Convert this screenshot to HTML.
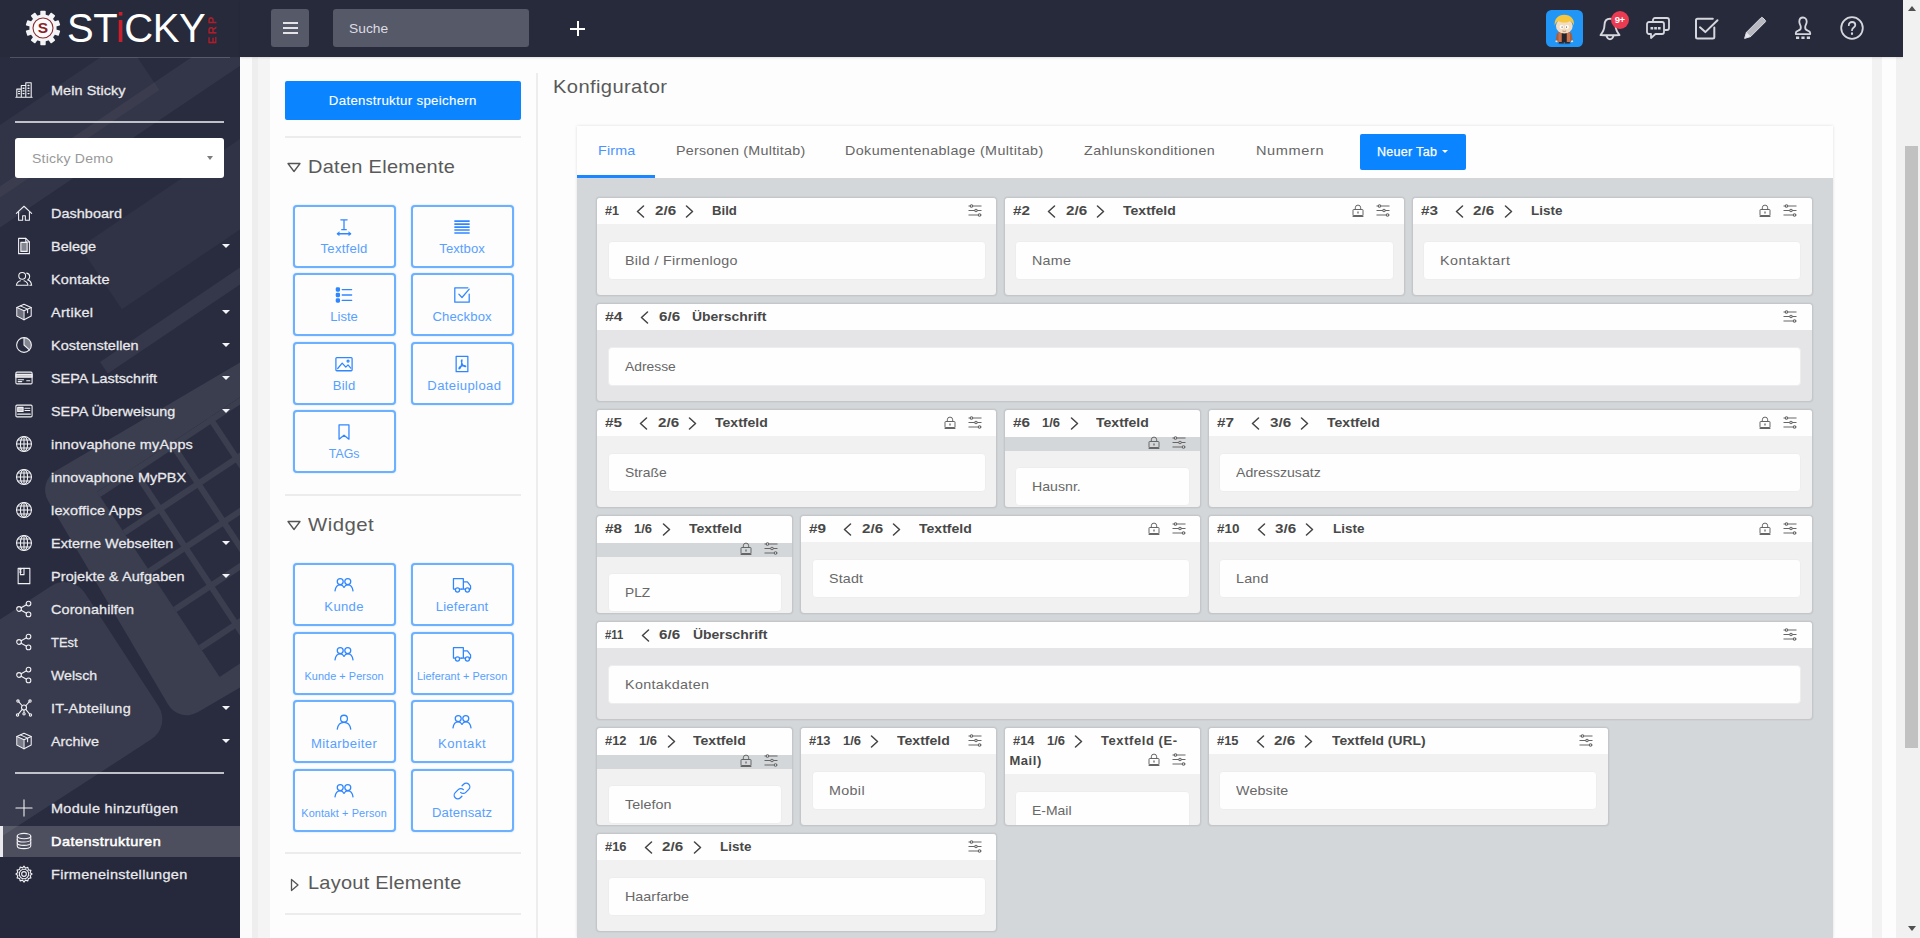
<!DOCTYPE html>
<html lang="de"><head><meta charset="utf-8"><title>Sticky ERP - Datenstrukturen</title>
<style>
*{box-sizing:border-box}
html,body{margin:0;padding:0}
body{width:1920px;height:938px;overflow:hidden;position:relative;background:#fdfdfd;font-family:"Liberation Sans",sans-serif;color:#555}
#sidebar{position:absolute;left:0;top:0;width:240px;height:938px;background:#2d3043;overflow:hidden;color:#fff}
.sbg{position:absolute;left:0;top:57px;width:240px;height:881px;overflow:hidden}
.sbg i{position:absolute;display:block}
.logo{position:absolute;left:0;top:0;width:240px;height:57px;background:#262a3b}
.shr{position:absolute;left:15px;width:209px;height:2px;background:#d9dae0;opacity:.85}
.sel{position:absolute;left:15px;top:138px;width:209px;height:40px;background:#fff;border-radius:3px;color:#999;font-size:13px;line-height:42px;padding-left:17px}
.sel i{position:absolute;right:11.500px;top:18px;border:3.900px solid transparent;border-top:4.200px solid #7c7c7c;border-bottom:0}
.mi{position:absolute;left:0;width:240px;height:33px;line-height:33px;font-size:13.500px;font-weight:400;color:#e9e9ee;white-space:nowrap;letter-spacing:.5px;-webkit-text-stroke:.3px #e9e9ee}
.mi.act{background:rgba(255,255,255,.17);height:31px;line-height:31px;margin-top:1px;border-left:3px solid #e9e9ee}
.mi.act .ic{left:12px;top:6.500px}
.mi.act .ml{left:48px;color:#fff;-webkit-text-stroke:.55px #fff}
.mi .ic{position:absolute;left:15px;top:7.500px;width:18px;height:18px;line-height:0;color:#f1f1f4}
.mi .ml{position:absolute;left:51px;top:.6px;text-shadow:0 0 1px rgba(0,0,0,.3)}
.mi .car{position:absolute;left:221.800px;top:14.500px;border:4.300px solid transparent;border-top:4.800px solid #f4f4f6;border-bottom:0}
#topbar{position:absolute;left:240px;top:0;width:1663px;height:57px;background:#262a3b;box-shadow:0 1px 2px rgba(0,0,0,.12)}
.hb{position:absolute;left:31px;top:9px;width:38px;height:38px;background:#565967;border-radius:3px}
.hb i{position:absolute;left:12px;width:15px;height:2px;background:#e4e4e8}
.hb i:nth-child(1){top:13px}.hb i:nth-child(2){top:18px}.hb i:nth-child(3){top:23px}
.srch{position:absolute;left:93px;top:9px;width:196px;height:38px;background:#565967;border-radius:3px;color:#dcdce2;font-size:13px;line-height:40px;padding-left:16px}
.plus{position:absolute;left:330px;top:21px;width:15px;height:15px}
.plus:before{content:"";position:absolute;left:0;top:6.500px;width:15px;height:2px;background:#fff}
.plus:after{content:"";position:absolute;left:6.500px;top:0;width:2px;height:15px;background:#fff}
.ti{position:absolute;color:#d6d6dd;line-height:0}
#sb{position:absolute;left:1903px;top:0;width:17px;height:938px;background:#f1f1f1}
#sb .th{position:absolute;left:2px;top:146px;width:13px;height:602px;background:#c1c1c1}
#sb .up{position:absolute;left:4.500px;top:6px;border:4px solid transparent;border-bottom:5px solid #505050;border-top:0}
#sb .dn{position:absolute;left:4.500px;top:926px;border:4px solid transparent;border-top:5px solid #505050;border-bottom:0}
#content{position:absolute;left:0;top:0;width:1903px;height:938px;background:#fdfdfd;overflow:hidden}
.strip{position:absolute;top:57px;height:881px}
.s1{left:240px;width:12px;background:#fbfbfb}
.s2{left:252px;width:6px;background:#eeeeef}
.s3{left:258px;width:12px;background:#f4f4f4}
.s4{left:1872px;width:10px;background:#f2f2f2}
.s5{left:1896px;width:7px;background:#f1f1f1}
#main{position:absolute;left:270px;top:57px;width:1602px;height:881px;background:#fdfdfd}
.savebtn{position:absolute;left:285px;top:81px;width:236px;height:39px;background:#0a84ff;border-radius:2px;color:#fff;font-size:12.500px;text-align:center;line-height:40px;-webkit-text-stroke:.12px #fff}
.hr{position:absolute;left:285px;width:236px;height:2px;background:#ececec}
.sec{position:absolute;left:287px;height:28px;line-height:28px;font-size:18.500px;color:#5a5a5a;white-space:nowrap}
.sec svg{position:absolute;left:0;top:9px}
.sec>span{position:absolute;left:21px;top:0}
.eb{position:absolute;width:102.500px;height:63px;border:2px solid #6cb1ff;border-radius:4px;background:#fdfdfd;color:#3f8fff;text-align:center;box-shadow:0 0 1.500px rgba(80,160,255,.5)}
.eb .ei{position:absolute;left:0;width:100%;top:11px;line-height:0;color:#2f86ff}
.eb .el{position:absolute;left:-4px;right:-4px;top:34px;font-size:12px;letter-spacing:.75px;line-height:16px;color:#58a0ff;white-space:nowrap}
.eb.sm .el{font-size:10px;letter-spacing:.35px;top:35px}
.vline{position:absolute;left:536px;top:73px;width:2px;height:865px;background:#ededed}
.ttl{position:absolute;left:553px;top:73px;font-size:18.500px;white-space:nowrap;line-height:28px;color:#5a5a5a}
#tabs{position:absolute;left:577px;top:126px;width:1256px;height:812px;box-shadow:0 0 3px rgba(0,0,0,.13)}
.tabbar{position:absolute;left:0;top:0;width:1256px;height:52px;background:#fefefe}
.tab{position:absolute;top:0;height:52px;line-height:50px;font-size:13px;color:#666;white-space:nowrap}
.tab.on{left:0;width:78px;padding-left:21px;color:#4a94ff;border-bottom:3px solid #1a86ff}
.ntab{position:absolute;left:783px;top:8px;width:106px;height:35.500px;background:#0a84ff;border-radius:2px;color:#fff;font-size:12.500px;letter-spacing:.3px;line-height:36px;padding-left:17px;-webkit-text-stroke:.25px #fff}
.ntab i{position:absolute;left:82px;top:16px;border:3px solid transparent;border-top:3.500px solid #fff;border-bottom:0}
.tabgray{position:absolute;left:0;top:52px;width:1256px;height:760px;background:#d3d7da}
.cd{position:absolute;height:99px;border:1px solid #c4c7ca;border-radius:4px;overflow:hidden;background:#f1f1f1;box-shadow:0 0 1.500px rgba(0,0,0,.14)}
.cd .ch_{position:relative;height:26.700px;background:#fefefe;font-size:13px;font-weight:700;color:#484848;line-height:19.500px;padding:3.500px 0 0 4.500px;white-space:nowrap;letter-spacing:.5px}
.cd .ch_ span{display:inline-block;vertical-align:top}
.cd .nm{margin-left:3.800px;transform-origin:0 50%;letter-spacing:0}
.cd .cl{margin-left:17px;width:9px;line-height:0;padding-top:3.500px}
.cd .cr{margin-left:9px;width:9px;line-height:0;padding-top:3.500px}
.cd .fr{margin-left:9.500px;transform-origin:0 50%;letter-spacing:0}
.cd .fr.nl{margin-left:11.900px}
.cd .ty{margin-left:18.400px;letter-spacing:.6px}
.cd .ty.nr{margin-left:12.500px}
.cd .fr.nl+.cr{margin-left:9.700px}
.cd .fr.nl+.cr+.ty{margin-left:17.700px}
.cd .ics{position:absolute;right:14.500px;top:6.500px;line-height:0;white-space:nowrap}
.cd .ics svg{margin-left:12px}
.cd .cb{position:relative;padding:17px 10.500px 0}
.cd .inp{height:39px;background:#fefefe;border:1px solid #ededed;border-radius:4px;font-size:13px;line-height:37px;color:#686868;padding-left:16px;white-space:nowrap}
.cd.hd{background:#e5e5e7}
.cd.wrap .ics{top:26px}
.cd.wrap .ch_{height:27.200px}
.cd.wrap .cb{margin-top:14px;background:#f1f1f1;height:70px;padding-top:16.500px}
.cd.wrap{background:#d3d7da}
.cd.two .ch_{height:46px;white-space:normal}
.cd.two .ics{top:25.500px}
.cd.two .ch_ span.ty{display:inline}
.lg{position:absolute;left:67px;top:5px;font-size:40px;line-height:46px;color:#fff;letter-spacing:-.400px;white-space:nowrap;font-weight:400}
.lg b{font-weight:400;color:#c8202c}
.erp{position:absolute;left:206.500px;top:44px;font-size:11px;font-weight:700;line-height:10px;color:#b01c28;transform-origin:0 0;transform:rotate(-90deg);letter-spacing:2.400px;white-space:nowrap}
.av{position:absolute;left:1306px;top:9.500px;width:37px;height:37px;line-height:0}
.bdg{position:absolute;left:1371px;top:11px;width:17.500px;height:17.500px;border-radius:9px;background:#ea3b52;color:#fff;font-size:9.500px;font-weight:700;line-height:17px;text-align:center;letter-spacing:-.5px}
/* sidebar backdrop (keyboard photo approximation) ; coordinates relative to .sbg (top:57) */
#sidebar{background:#292c3f}
.sbg .k1{left:37px;top:425px;width:460px;height:280px;transform-origin:0 0;transform:rotate(-30.500deg);background:rgba(255,255,255,.085);border-radius:22px}
.sbg .k2{left:97px;top:435px;width:330px;height:222px;transform-origin:0 0;transform:rotate(-33.500deg);background-color:#2a2d40;background-image:linear-gradient(90deg,#3b3e4f 0,#3b3e4f 6px,transparent 6px),linear-gradient(0deg,#3b3e4f 0,#3b3e4f 6px,transparent 6px);background-size:46px 46px;background-position:-6px 6px}
.sbg .k3{left:-60px;top:170px;width:420px;height:34px;transform-origin:0 0;transform:rotate(-34deg);background:rgba(255,255,255,.05)}
.sbg .k4{left:80px;top:190px;width:300px;height:75px;transform-origin:0 0;transform:rotate(-34deg);background:rgba(255,255,255,.035)}
.sbg .k5{left:100px;top:305px;width:220px;height:14px;transform-origin:0 0;transform:rotate(-34deg);background:rgba(255,255,255,.06)}
.sbg .k6{left:-40px;top:95px;width:200px;height:60px;transform-origin:0 0;transform:rotate(-34deg);background:rgba(255,255,255,.04)}
.sbg .k7{left:-158px;top:665px;width:274px;height:183px;transform-origin:0 0;transform:rotate(-33deg);border-radius:24px;background:rgba(255,255,255,.075)}
.sbg .k8{left:0;top:800px;width:240px;height:81px;background:rgba(0,0,0,.06)}

</style></head><body>
<div id="content">
<div class="strip s1"></div><div class="strip s2"></div><div class="strip s3"></div><div class="strip s4"></div><div class="strip s5"></div>
<div id="main"></div>
<div class="savebtn"><span style="display:inline-block;letter-spacing:0.30px;transform:scaleX(1.060);transform-origin:50% 50%">Datenstruktur speichern</span></div>
<div class="hr" style="top:136px"></div>
<div class="sec" style="top:153px"><svg width="14" height="11" viewBox="0 0 14 11" fill="none" stroke="#555" stroke-width="1.300" stroke-linejoin="round"><path d="M1 1.500h12L7 9.500z"/></svg><span><span style="display:inline-block;letter-spacing:0.26px;transform:scaleX(1.080);transform-origin:0 50%">Daten Elemente</span></span></div>
<div class="hr" style="top:494px"></div>
<div class="sec" style="top:511px"><svg width="14" height="11" viewBox="0 0 14 11" fill="none" stroke="#555" stroke-width="1.300" stroke-linejoin="round"><path d="M1 1.500h12L7 9.500z"/></svg><span><span style="display:inline-block;letter-spacing:0.44px;transform:scaleX(1.100);transform-origin:0 50%">Widget</span></span></div>
<div class="hr" style="top:852px"></div>
<div class="sec" style="top:869px"><svg width="14" height="14" viewBox="0 0 14 14" fill="none" stroke="#555" stroke-width="1.300" stroke-linejoin="round"><path d="M4.500 1.500v11L11 7z"/></svg><span><span style="display:inline-block;letter-spacing:0.22px;transform:scaleX(1.080);transform-origin:0 50%">Layout Elemente</span></span></div>
<div class="hr" style="top:913px"></div>
<div class="eb" style="left:293px;top:205px"><span class="ei"><svg width="18" height="18" viewBox="0 0 20 20" fill="none" stroke="currentColor" stroke-width="1.400" stroke-linecap="round" stroke-linejoin="round"><path d="M6.500 2h7M10 2v11M7.500 13h5M3 17.500h14"/><path d="M4.500 15.500l-2.500 2 2.500 2zM15.500 15.500l2.500 2-2.500 2z" fill="currentColor" stroke-width=".6"/></svg></span><span class="el" style="letter-spacing:0.22px;transform:scaleX(1.090);transform-origin:50% 50%;margin-left:0.30px">Textfeld</span></div>
<div class="eb" style="left:411px;top:205px"><span class="ei"><svg width="18" height="18" viewBox="0 0 20 20" fill="none" stroke="currentColor" stroke-width="1.400" stroke-linecap="round" stroke-linejoin="round"><path d="M1.500 3.500h17M1.500 6.800h17M1.500 10.100h17M1.500 13.400h17M1.500 16.700h17" stroke-width="1.800" stroke-linecap="butt"/></svg></span><span class="el" style="letter-spacing:0.07px;transform:scaleX(1.090);transform-origin:50% 50%;margin-left:0.30px">Textbox</span></div>
<div class="eb" style="left:293px;top:273px"><span class="ei"><svg width="18" height="18" viewBox="0 0 20 20" fill="none" stroke="currentColor" stroke-width="1.400" stroke-linecap="round" stroke-linejoin="round"><rect x="1.500" y="2.200" width="3.400" height="3.400" rx=".8" fill="currentColor"/><rect x="1.500" y="8.300" width="3.400" height="3.400" rx=".8" fill="currentColor"/><rect x="1.500" y="14.400" width="3.400" height="3.400" rx=".8" fill="currentColor"/><path d="M8 3.900h10.500M8 10h10.500M8 16.100h10.500"/></svg></span><span class="el" style="letter-spacing:0.00px;transform:scaleX(1.087);transform-origin:50% 50%;margin-left:0.30px">Liste</span></div>
<div class="eb" style="left:411px;top:273px"><span class="ei"><svg width="18" height="18" viewBox="0 0 20 20" fill="none" stroke="currentColor" stroke-width="1.400" stroke-linecap="round" stroke-linejoin="round"><path d="M18 9v9H2V2h14.500"/><path d="M6.500 9l3.500 3.800 8-9.300"/></svg></span><span class="el" style="letter-spacing:0.13px;transform:scaleX(1.090);transform-origin:50% 50%;margin-left:0.30px">Checkbox</span></div>
<div class="eb" style="left:293px;top:342px"><span class="ei"><svg width="18" height="18" viewBox="0 0 20 20" fill="none" stroke="currentColor" stroke-width="1.400" stroke-linecap="round" stroke-linejoin="round"><rect x="1" y="3" width="18" height="14.500" rx="1"/><path d="M3 15l5-6 4 4.500 2.500-2.500 3 3.500"/><circle cx="14.500" cy="6.800" r="1.100"/></svg></span><span class="el" style="letter-spacing:0.21px;transform:scaleX(1.090);transform-origin:50% 50%;margin-left:0.30px">Bild</span></div>
<div class="eb" style="left:411px;top:342px"><span class="ei"><svg width="18" height="18" viewBox="0 0 20 20" fill="none" stroke="currentColor" stroke-width="1.400" stroke-linecap="round" stroke-linejoin="round"><path d="M3.500 1.500h13v17h-13z"/><path d="M10 5.500c-1 0-.8 2 0 4s3 4 4 3.200-3-1.300-5-.4-3 3-2 3 2.500-3 3-9.800"/></svg></span><span class="el" style="letter-spacing:0.35px;transform:scaleX(1.090);transform-origin:50% 50%;margin-left:3.80px">Dateiupload</span></div>
<div class="eb" style="left:293px;top:410.4px"><span class="ei"><svg width="18" height="18" viewBox="0 0 20 20" fill="none" stroke="currentColor" stroke-width="1.400" stroke-linecap="round" stroke-linejoin="round"><path d="M4.500 2h11v16l-5.500-4.500L4.500 18z"/></svg></span><span class="el" style="letter-spacing:-0.00px;transform:scaleX(1.030);transform-origin:50% 50%;margin-left:0.30px">TAGs</span></div>
<div class="eb" style="left:293px;top:563px"><span class="ei"><svg width="22" height="18" viewBox="0 0 22 20" fill="none" stroke="currentColor" stroke-width="1.400" stroke-linecap="round" stroke-linejoin="round"><circle cx="6.800" cy="6.200" r="3.300"/><circle cx="15.200" cy="6.200" r="3.300"/><path d="M1 16.500c.6-4 3-6.600 5.800-6.600 2 0 3.400 1.200 4.200 2.800M11 12.700c.8-1.600 2.200-2.800 4.200-2.800 2.800 0 5.200 2.600 5.800 6.600" /></svg></span><span class="el" style="letter-spacing:0.31px;transform:scaleX(1.090);transform-origin:50% 50%;margin-left:0.30px">Kunde</span></div>
<div class="eb" style="left:411px;top:563px"><span class="ei"><svg width="22" height="18" viewBox="0 0 22 20" fill="none" stroke="currentColor" stroke-width="1.400" stroke-linecap="round" stroke-linejoin="round"><path d="M1.500 3h11v11.500h-2M1.500 3v11.500h2M12.500 6.500h4.500l3.500 4.500v3.500h-1.500M12.500 14.500h2.500"/><circle cx="6" cy="15.500" r="2.300"/><circle cx="17" cy="15.500" r="2.300"/><path d="M8.300 14.500h2.200"/></svg></span><span class="el" style="letter-spacing:0.18px;transform:scaleX(1.090);transform-origin:50% 50%;margin-left:0.30px">Lieferant</span></div>
<div class="eb sm" style="left:293px;top:632px"><span class="ei"><svg width="22" height="18" viewBox="0 0 22 20" fill="none" stroke="currentColor" stroke-width="1.400" stroke-linecap="round" stroke-linejoin="round"><circle cx="6.800" cy="6.200" r="3.300"/><circle cx="15.200" cy="6.200" r="3.300"/><path d="M1 16.500c.6-4 3-6.600 5.800-6.600 2 0 3.400 1.200 4.200 2.800M11 12.700c.8-1.600 2.200-2.800 4.200-2.800 2.800 0 5.200 2.600 5.800 6.600" /></svg></span><span class="el" style="letter-spacing:0.05px;transform:scaleX(1.090);transform-origin:50% 50%;margin-left:0.30px">Kunde + Person</span></div>
<div class="eb sm" style="left:411px;top:632px"><span class="ei"><svg width="22" height="18" viewBox="0 0 22 20" fill="none" stroke="currentColor" stroke-width="1.400" stroke-linecap="round" stroke-linejoin="round"><path d="M1.500 3h11v11.500h-2M1.500 3v11.500h2M12.500 6.500h4.500l3.500 4.500v3.500h-1.500M12.500 14.500h2.500"/><circle cx="6" cy="15.500" r="2.300"/><circle cx="17" cy="15.500" r="2.300"/><path d="M8.300 14.500h2.200"/></svg></span><span class="el" style="letter-spacing:0.05px;transform:scaleX(1.090);transform-origin:50% 50%;margin-left:0.30px">Lieferant + Person</span></div>
<div class="eb" style="left:293px;top:700px"><span class="ei"><svg width="18" height="18" viewBox="0 0 20 20" fill="none" stroke="currentColor" stroke-width="1.400" stroke-linecap="round" stroke-linejoin="round"><circle cx="10" cy="6.300" r="3.800"/><path d="M2.500 18c.7-4.500 3.500-7.500 7.500-7.500s6.800 3 7.500 7.500"/></svg></span><span class="el" style="letter-spacing:0.37px;transform:scaleX(1.090);transform-origin:50% 50%;margin-left:0.30px">Mitarbeiter</span></div>
<div class="eb" style="left:411px;top:700px"><span class="ei"><svg width="22" height="18" viewBox="0 0 22 20" fill="none" stroke="currentColor" stroke-width="1.400" stroke-linecap="round" stroke-linejoin="round"><circle cx="6.800" cy="6.200" r="3.300"/><circle cx="15.200" cy="6.200" r="3.300"/><path d="M1 16.500c.6-4 3-6.600 5.800-6.600 2 0 3.400 1.200 4.200 2.800M11 12.700c.8-1.600 2.200-2.800 4.200-2.800 2.800 0 5.200 2.600 5.800 6.600" /></svg></span><span class="el" style="letter-spacing:0.52px;transform:scaleX(1.090);transform-origin:50% 50%;margin-left:0.30px">Kontakt</span></div>
<div class="eb sm" style="left:293px;top:769px"><span class="ei"><svg width="22" height="18" viewBox="0 0 22 20" fill="none" stroke="currentColor" stroke-width="1.400" stroke-linecap="round" stroke-linejoin="round"><circle cx="6.800" cy="6.200" r="3.300"/><circle cx="15.200" cy="6.200" r="3.300"/><path d="M1 16.500c.6-4 3-6.600 5.800-6.600 2 0 3.400 1.200 4.200 2.800M11 12.700c.8-1.600 2.200-2.800 4.200-2.800 2.800 0 5.200 2.600 5.800 6.600" /></svg></span><span class="el" style="letter-spacing:0.10px;transform:scaleX(1.090);transform-origin:50% 50%;margin-left:0.30px">Kontakt + Person</span></div>
<div class="eb" style="left:411px;top:769px"><span class="ei"><svg width="18" height="18" viewBox="0 0 20 20" fill="none" stroke="currentColor" stroke-width="1.400" stroke-linecap="round" stroke-linejoin="round"><path d="M8.500 11.500a4 4 0 0 0 5.700 0l3.300-3.300a4 4 0 0 0-5.700-5.700l-1.700 1.700"/><path d="M11.500 8.500a4 4 0 0 0-5.700 0l-3.300 3.300a4 4 0 0 0 5.700 5.700l1.700-1.700"/></svg></span><span class="el" style="letter-spacing:0.13px;transform:scaleX(1.090);transform-origin:50% 50%;margin-left:0.30px">Datensatz</span></div>

<div class="vline"></div>
<div class="ttl"><span style="display:inline-block;letter-spacing:0.34px;transform:scaleX(1.090);transform-origin:0 50%">Konfigurator</span></div>
<div id="tabs">
<div class="tabbar"><span class="tab on"><span style="display:inline-block;letter-spacing:0.15px;transform:scaleX(1.100);transform-origin:0 50%">Firma</span></span><span class="tab" style="left:98.500px"><span style="display:inline-block;letter-spacing:0.22px;transform:scaleX(1.100);transform-origin:0 50%">Personen (Multitab)</span></span><span class="tab" style="left:268px"><span style="display:inline-block;letter-spacing:0.37px;transform:scaleX(1.100);transform-origin:0 50%">Dokumentenablage (Multitab)</span></span><span class="tab" style="left:507px"><span style="display:inline-block;letter-spacing:0.36px;transform:scaleX(1.100);transform-origin:0 50%">Zahlunskonditionen</span></span><span class="tab" style="left:679px"><span style="display:inline-block;letter-spacing:0.54px;transform:scaleX(1.120);transform-origin:0 50%">Nummern</span></span><span class="ntab">Neuer Tab<i></i></span></div>
<div class="tabgray"></div>
</div>
<div class="cd" style="left:596.1px;top:196.8px;width:401.2px"><div class="ch_"><span class="nm" style="transform:scaleX(0.968);margin-right:-0.46px">#1</span><span class="cl"><svg class="ch" width="9" height="13" viewBox="0 0 9 13" fill="none" stroke="#444" stroke-width="1.500" stroke-linecap="round" stroke-linejoin="round"><path d="M7.500 1L1.500 6.500l6 5.500"/></svg></span><span class="fr" style="transform:scaleX(1.168);margin-right:3.03px">2/6</span><span class="cr"><svg class="ch" width="9" height="13" viewBox="0 0 9 13" fill="none" stroke="#444" stroke-width="1.500" stroke-linecap="round" stroke-linejoin="round"><path d="M1.500 1l6 5.500-6 5.500"/></svg></span><span class="ty" style="letter-spacing:0.00px;transform:scaleX(1.013);transform-origin:0 50%">Bild</span><span class="ics"><svg class="sl" width="14" height="13" viewBox="0 0 14 13" fill="none" stroke="#666" stroke-width="1.100"><path d="M.5 2h13M.5 6.500h13M.5 11h13"/><circle cx="3.500" cy="2" r="1.200" fill="#fff"/><circle cx="8" cy="6.500" r="1.200" fill="#fff"/><circle cx="11.500" cy="11" r="1.200" fill="#fff"/></svg></span></div><div class="cb"><div class="inp"><span style="display:inline-block;letter-spacing:0.29px;transform:scaleX(1.100);transform-origin:0 50%">Bild / Firmenlogo</span></div></div></div>
<div class="cd" style="left:1003.9px;top:196.8px;width:401.2px"><div class="ch_"><span class="nm" style="transform:scaleX(1.176);margin-right:2.54px">#2</span><span class="cl"><svg class="ch" width="9" height="13" viewBox="0 0 9 13" fill="none" stroke="#444" stroke-width="1.500" stroke-linecap="round" stroke-linejoin="round"><path d="M7.500 1L1.500 6.500l6 5.500"/></svg></span><span class="fr" style="transform:scaleX(1.168);margin-right:3.03px">2/6</span><span class="cr"><svg class="ch" width="9" height="13" viewBox="0 0 9 13" fill="none" stroke="#444" stroke-width="1.500" stroke-linecap="round" stroke-linejoin="round"><path d="M1.500 1l6 5.500-6 5.500"/></svg></span><span class="ty" style="letter-spacing:0.01px;transform:scaleX(1.080);transform-origin:0 50%">Textfeld</span><span class="ics"><svg class="lk" width="12" height="13" viewBox="0 0 12 13" fill="none" stroke="#666" stroke-width="1"><path d="M3.300 5.500V3.800a2.700 2.700 0 0 1 5.400 0v1.700"/><rect x="1" y="5.500" width="10" height="6" rx=".6"/><path d="M.6 12.300h10.800" stroke-width="1.500"/><path d="M6 7.500v2" stroke-width="1.300"/></svg><svg class="sl" width="14" height="13" viewBox="0 0 14 13" fill="none" stroke="#666" stroke-width="1.100"><path d="M.5 2h13M.5 6.500h13M.5 11h13"/><circle cx="3.500" cy="2" r="1.200" fill="#fff"/><circle cx="8" cy="6.500" r="1.200" fill="#fff"/><circle cx="11.500" cy="11" r="1.200" fill="#fff"/></svg></span></div><div class="cb"><div class="inp"><span style="display:inline-block;letter-spacing:0.22px;transform:scaleX(1.100);transform-origin:0 50%">Name</span></div></div></div>
<div class="cd" style="left:1411.7px;top:196.8px;width:401.2px"><div class="ch_"><span class="nm" style="transform:scaleX(1.176);margin-right:2.54px">#3</span><span class="cl"><svg class="ch" width="9" height="13" viewBox="0 0 9 13" fill="none" stroke="#444" stroke-width="1.500" stroke-linecap="round" stroke-linejoin="round"><path d="M7.500 1L1.500 6.500l6 5.500"/></svg></span><span class="fr" style="transform:scaleX(1.168);margin-right:3.03px">2/6</span><span class="cr"><svg class="ch" width="9" height="13" viewBox="0 0 9 13" fill="none" stroke="#444" stroke-width="1.500" stroke-linecap="round" stroke-linejoin="round"><path d="M1.500 1l6 5.500-6 5.500"/></svg></span><span class="ty" style="letter-spacing:0.00px;transform:scaleX(1.034);transform-origin:0 50%">Liste</span><span class="ics"><svg class="lk" width="12" height="13" viewBox="0 0 12 13" fill="none" stroke="#666" stroke-width="1"><path d="M3.300 5.500V3.800a2.700 2.700 0 0 1 5.400 0v1.700"/><rect x="1" y="5.500" width="10" height="6" rx=".6"/><path d="M.6 12.300h10.800" stroke-width="1.500"/><path d="M6 7.500v2" stroke-width="1.300"/></svg><svg class="sl" width="14" height="13" viewBox="0 0 14 13" fill="none" stroke="#666" stroke-width="1.100"><path d="M.5 2h13M.5 6.500h13M.5 11h13"/><circle cx="3.500" cy="2" r="1.200" fill="#fff"/><circle cx="8" cy="6.500" r="1.200" fill="#fff"/><circle cx="11.500" cy="11" r="1.200" fill="#fff"/></svg></span></div><div class="cb"><div class="inp"><span style="display:inline-block;letter-spacing:0.48px;transform:scaleX(1.100);transform-origin:0 50%">Kontaktart</span></div></div></div>
<div class="cd hd" style="left:596.1px;top:302.8px;width:1216.8px"><div class="ch_"><span class="nm" style="transform:scaleX(1.224);margin-right:3.24px">#4</span><span class="cl"><svg class="ch" width="9" height="13" viewBox="0 0 9 13" fill="none" stroke="#444" stroke-width="1.500" stroke-linecap="round" stroke-linejoin="round"><path d="M7.500 1L1.500 6.500l6 5.500"/></svg></span><span class="fr" style="transform:scaleX(1.168);margin-right:3.03px">6/6</span><span class="ty nr" style="letter-spacing:0.00px;transform:scaleX(1.072);transform-origin:0 50%">Überschrift</span><span class="ics"><svg class="sl" width="14" height="13" viewBox="0 0 14 13" fill="none" stroke="#666" stroke-width="1.100"><path d="M.5 2h13M.5 6.500h13M.5 11h13"/><circle cx="3.500" cy="2" r="1.200" fill="#fff"/><circle cx="8" cy="6.500" r="1.200" fill="#fff"/><circle cx="11.500" cy="11" r="1.200" fill="#fff"/></svg></span></div><div class="cb"><div class="inp"><span style="display:inline-block;letter-spacing:0.00px;transform:scaleX(1.065);transform-origin:0 50%">Adresse</span></div></div></div>
<div class="cd" style="left:596.1px;top:408.8px;width:401.2px"><div class="ch_"><span class="nm" style="transform:scaleX(1.176);margin-right:2.54px">#5</span><span class="cl"><svg class="ch" width="9" height="13" viewBox="0 0 9 13" fill="none" stroke="#444" stroke-width="1.500" stroke-linecap="round" stroke-linejoin="round"><path d="M7.500 1L1.500 6.500l6 5.500"/></svg></span><span class="fr" style="transform:scaleX(1.168);margin-right:3.03px">2/6</span><span class="cr"><svg class="ch" width="9" height="13" viewBox="0 0 9 13" fill="none" stroke="#444" stroke-width="1.500" stroke-linecap="round" stroke-linejoin="round"><path d="M1.500 1l6 5.500-6 5.500"/></svg></span><span class="ty" style="letter-spacing:0.01px;transform:scaleX(1.080);transform-origin:0 50%">Textfeld</span><span class="ics"><svg class="lk" width="12" height="13" viewBox="0 0 12 13" fill="none" stroke="#666" stroke-width="1"><path d="M3.300 5.500V3.800a2.700 2.700 0 0 1 5.400 0v1.700"/><rect x="1" y="5.500" width="10" height="6" rx=".6"/><path d="M.6 12.300h10.800" stroke-width="1.500"/><path d="M6 7.500v2" stroke-width="1.300"/></svg><svg class="sl" width="14" height="13" viewBox="0 0 14 13" fill="none" stroke="#666" stroke-width="1.100"><path d="M.5 2h13M.5 6.500h13M.5 11h13"/><circle cx="3.500" cy="2" r="1.200" fill="#fff"/><circle cx="8" cy="6.500" r="1.200" fill="#fff"/><circle cx="11.500" cy="11" r="1.200" fill="#fff"/></svg></span></div><div class="cb"><div class="inp"><span style="display:inline-block;letter-spacing:0.00px;transform:scaleX(1.067);transform-origin:0 50%">Straße</span></div></div></div>
<div class="cd wrap" style="left:1003.9px;top:408.8px;width:197.3px"><div class="ch_"><span class="nm" style="transform:scaleX(1.176);margin-right:2.54px">#6</span><span class="fr nl" style="transform:scaleX(0.996);margin-right:-0.07px">1/6</span><span class="cr"><svg class="ch" width="9" height="13" viewBox="0 0 9 13" fill="none" stroke="#444" stroke-width="1.500" stroke-linecap="round" stroke-linejoin="round"><path d="M1.500 1l6 5.500-6 5.500"/></svg></span><span class="ty" style="letter-spacing:0.01px;transform:scaleX(1.080);transform-origin:0 50%">Textfeld</span><span class="ics"><svg class="lk" width="12" height="13" viewBox="0 0 12 13" fill="none" stroke="#666" stroke-width="1"><path d="M3.300 5.500V3.800a2.700 2.700 0 0 1 5.400 0v1.700"/><rect x="1" y="5.500" width="10" height="6" rx=".6"/><path d="M.6 12.300h10.800" stroke-width="1.500"/><path d="M6 7.500v2" stroke-width="1.300"/></svg><svg class="sl" width="14" height="13" viewBox="0 0 14 13" fill="none" stroke="#666" stroke-width="1.100"><path d="M.5 2h13M.5 6.500h13M.5 11h13"/><circle cx="3.500" cy="2" r="1.200" fill="#fff"/><circle cx="8" cy="6.500" r="1.200" fill="#fff"/><circle cx="11.500" cy="11" r="1.200" fill="#fff"/></svg></span></div><div class="cb"><div class="inp"><span style="display:inline-block;letter-spacing:0.00px;transform:scaleX(1.088);transform-origin:0 50%">Hausnr.</span></div></div></div>
<div class="cd" style="left:1207.8px;top:408.8px;width:605.1px"><div class="ch_"><span class="nm" style="transform:scaleX(1.176);margin-right:2.54px">#7</span><span class="cl"><svg class="ch" width="9" height="13" viewBox="0 0 9 13" fill="none" stroke="#444" stroke-width="1.500" stroke-linecap="round" stroke-linejoin="round"><path d="M7.500 1L1.500 6.500l6 5.500"/></svg></span><span class="fr" style="transform:scaleX(1.168);margin-right:3.03px">3/6</span><span class="cr"><svg class="ch" width="9" height="13" viewBox="0 0 9 13" fill="none" stroke="#444" stroke-width="1.500" stroke-linecap="round" stroke-linejoin="round"><path d="M1.500 1l6 5.500-6 5.500"/></svg></span><span class="ty" style="letter-spacing:0.01px;transform:scaleX(1.080);transform-origin:0 50%">Textfeld</span><span class="ics"><svg class="lk" width="12" height="13" viewBox="0 0 12 13" fill="none" stroke="#666" stroke-width="1"><path d="M3.300 5.500V3.800a2.700 2.700 0 0 1 5.400 0v1.700"/><rect x="1" y="5.500" width="10" height="6" rx=".6"/><path d="M.6 12.300h10.800" stroke-width="1.500"/><path d="M6 7.500v2" stroke-width="1.300"/></svg><svg class="sl" width="14" height="13" viewBox="0 0 14 13" fill="none" stroke="#666" stroke-width="1.100"><path d="M.5 2h13M.5 6.500h13M.5 11h13"/><circle cx="3.500" cy="2" r="1.200" fill="#fff"/><circle cx="8" cy="6.500" r="1.200" fill="#fff"/><circle cx="11.500" cy="11" r="1.200" fill="#fff"/></svg></span></div><div class="cb"><div class="inp"><span style="display:inline-block;letter-spacing:-0.00px;transform:scaleX(1.086);transform-origin:0 50%">Adresszusatz</span></div></div></div>
<div class="cd wrap" style="left:596.1px;top:514.8px;width:197.3px"><div class="ch_"><span class="nm" style="transform:scaleX(1.176);margin-right:2.54px">#8</span><span class="fr nl" style="transform:scaleX(0.996);margin-right:-0.07px">1/6</span><span class="cr"><svg class="ch" width="9" height="13" viewBox="0 0 9 13" fill="none" stroke="#444" stroke-width="1.500" stroke-linecap="round" stroke-linejoin="round"><path d="M1.500 1l6 5.500-6 5.500"/></svg></span><span class="ty" style="letter-spacing:0.01px;transform:scaleX(1.080);transform-origin:0 50%">Textfeld</span><span class="ics"><svg class="lk" width="12" height="13" viewBox="0 0 12 13" fill="none" stroke="#666" stroke-width="1"><path d="M3.300 5.500V3.800a2.700 2.700 0 0 1 5.400 0v1.700"/><rect x="1" y="5.500" width="10" height="6" rx=".6"/><path d="M.6 12.300h10.800" stroke-width="1.500"/><path d="M6 7.500v2" stroke-width="1.300"/></svg><svg class="sl" width="14" height="13" viewBox="0 0 14 13" fill="none" stroke="#666" stroke-width="1.100"><path d="M.5 2h13M.5 6.500h13M.5 11h13"/><circle cx="3.500" cy="2" r="1.200" fill="#fff"/><circle cx="8" cy="6.500" r="1.200" fill="#fff"/><circle cx="11.500" cy="11" r="1.200" fill="#fff"/></svg></span></div><div class="cb"><div class="inp"><span style="display:inline-block;letter-spacing:0.00px;transform:scaleX(1.057);transform-origin:0 50%">PLZ</span></div></div></div>
<div class="cd" style="left:800.0px;top:514.8px;width:401.2px"><div class="ch_"><span class="nm" style="transform:scaleX(1.176);margin-right:2.54px">#9</span><span class="cl"><svg class="ch" width="9" height="13" viewBox="0 0 9 13" fill="none" stroke="#444" stroke-width="1.500" stroke-linecap="round" stroke-linejoin="round"><path d="M7.500 1L1.500 6.500l6 5.500"/></svg></span><span class="fr" style="transform:scaleX(1.168);margin-right:3.03px">2/6</span><span class="cr"><svg class="ch" width="9" height="13" viewBox="0 0 9 13" fill="none" stroke="#444" stroke-width="1.500" stroke-linecap="round" stroke-linejoin="round"><path d="M1.500 1l6 5.500-6 5.500"/></svg></span><span class="ty" style="letter-spacing:0.01px;transform:scaleX(1.080);transform-origin:0 50%">Textfeld</span><span class="ics"><svg class="lk" width="12" height="13" viewBox="0 0 12 13" fill="none" stroke="#666" stroke-width="1"><path d="M3.300 5.500V3.800a2.700 2.700 0 0 1 5.400 0v1.700"/><rect x="1" y="5.500" width="10" height="6" rx=".6"/><path d="M.6 12.300h10.800" stroke-width="1.500"/><path d="M6 7.500v2" stroke-width="1.300"/></svg><svg class="sl" width="14" height="13" viewBox="0 0 14 13" fill="none" stroke="#666" stroke-width="1.100"><path d="M.5 2h13M.5 6.500h13M.5 11h13"/><circle cx="3.500" cy="2" r="1.200" fill="#fff"/><circle cx="8" cy="6.500" r="1.200" fill="#fff"/><circle cx="11.500" cy="11" r="1.200" fill="#fff"/></svg></span></div><div class="cb"><div class="inp"><span style="display:inline-block;letter-spacing:0.16px;transform:scaleX(1.100);transform-origin:0 50%">Stadt</span></div></div></div>
<div class="cd" style="left:1207.8px;top:514.8px;width:605.1px"><div class="ch_"><span class="nm" style="transform:scaleX(1.037);margin-right:0.81px">#10</span><span class="cl"><svg class="ch" width="9" height="13" viewBox="0 0 9 13" fill="none" stroke="#444" stroke-width="1.500" stroke-linecap="round" stroke-linejoin="round"><path d="M7.500 1L1.500 6.500l6 5.500"/></svg></span><span class="fr" style="transform:scaleX(1.168);margin-right:3.03px">3/6</span><span class="cr"><svg class="ch" width="9" height="13" viewBox="0 0 9 13" fill="none" stroke="#444" stroke-width="1.500" stroke-linecap="round" stroke-linejoin="round"><path d="M1.500 1l6 5.500-6 5.500"/></svg></span><span class="ty" style="letter-spacing:0.00px;transform:scaleX(1.034);transform-origin:0 50%">Liste</span><span class="ics"><svg class="lk" width="12" height="13" viewBox="0 0 12 13" fill="none" stroke="#666" stroke-width="1"><path d="M3.300 5.500V3.800a2.700 2.700 0 0 1 5.400 0v1.700"/><rect x="1" y="5.500" width="10" height="6" rx=".6"/><path d="M.6 12.300h10.800" stroke-width="1.500"/><path d="M6 7.500v2" stroke-width="1.300"/></svg><svg class="sl" width="14" height="13" viewBox="0 0 14 13" fill="none" stroke="#666" stroke-width="1.100"><path d="M.5 2h13M.5 6.500h13M.5 11h13"/><circle cx="3.500" cy="2" r="1.200" fill="#fff"/><circle cx="8" cy="6.500" r="1.200" fill="#fff"/><circle cx="11.500" cy="11" r="1.200" fill="#fff"/></svg></span></div><div class="cb"><div class="inp"><span style="display:inline-block;letter-spacing:0.18px;transform:scaleX(1.100);transform-origin:0 50%">Land</span></div></div></div>
<div class="cd hd" style="left:596.1px;top:620.8px;width:1216.8px"><div class="ch_"><span class="nm" style="transform:scaleX(0.867);margin-right:-2.89px">#11</span><span class="cl"><svg class="ch" width="9" height="13" viewBox="0 0 9 13" fill="none" stroke="#444" stroke-width="1.500" stroke-linecap="round" stroke-linejoin="round"><path d="M7.500 1L1.500 6.500l6 5.500"/></svg></span><span class="fr" style="transform:scaleX(1.168);margin-right:3.03px">6/6</span><span class="ty nr" style="letter-spacing:0.00px;transform:scaleX(1.072);transform-origin:0 50%">Überschrift</span><span class="ics"><svg class="sl" width="14" height="13" viewBox="0 0 14 13" fill="none" stroke="#666" stroke-width="1.100"><path d="M.5 2h13M.5 6.500h13M.5 11h13"/><circle cx="3.500" cy="2" r="1.200" fill="#fff"/><circle cx="8" cy="6.500" r="1.200" fill="#fff"/><circle cx="11.500" cy="11" r="1.200" fill="#fff"/></svg></span></div><div class="cb"><div class="inp"><span style="display:inline-block;letter-spacing:0.33px;transform:scaleX(1.100);transform-origin:0 50%">Kontakdaten</span></div></div></div>
<div class="cd wrap" style="left:596.1px;top:726.8px;width:197.3px"><div class="ch_"><span class="nm" style="transform:scaleX(0.991);margin-right:-0.19px">#12</span><span class="fr nl" style="transform:scaleX(0.996);margin-right:-0.07px">1/6</span><span class="cr"><svg class="ch" width="9" height="13" viewBox="0 0 9 13" fill="none" stroke="#444" stroke-width="1.500" stroke-linecap="round" stroke-linejoin="round"><path d="M1.500 1l6 5.500-6 5.500"/></svg></span><span class="ty" style="letter-spacing:0.01px;transform:scaleX(1.080);transform-origin:0 50%">Textfeld</span><span class="ics"><svg class="lk" width="12" height="13" viewBox="0 0 12 13" fill="none" stroke="#666" stroke-width="1"><path d="M3.300 5.500V3.800a2.700 2.700 0 0 1 5.400 0v1.700"/><rect x="1" y="5.500" width="10" height="6" rx=".6"/><path d="M.6 12.300h10.800" stroke-width="1.500"/><path d="M6 7.500v2" stroke-width="1.300"/></svg><svg class="sl" width="14" height="13" viewBox="0 0 14 13" fill="none" stroke="#666" stroke-width="1.100"><path d="M.5 2h13M.5 6.500h13M.5 11h13"/><circle cx="3.500" cy="2" r="1.200" fill="#fff"/><circle cx="8" cy="6.500" r="1.200" fill="#fff"/><circle cx="11.500" cy="11" r="1.200" fill="#fff"/></svg></span></div><div class="cb"><div class="inp"><span style="display:inline-block;letter-spacing:0.06px;transform:scaleX(1.100);transform-origin:0 50%">Telefon</span></div></div></div>
<div class="cd" style="left:800.0px;top:726.8px;width:197.3px"><div class="ch_"><span class="nm" style="transform:scaleX(0.991);margin-right:-0.19px">#13</span><span class="fr nl" style="transform:scaleX(0.996);margin-right:-0.07px">1/6</span><span class="cr"><svg class="ch" width="9" height="13" viewBox="0 0 9 13" fill="none" stroke="#444" stroke-width="1.500" stroke-linecap="round" stroke-linejoin="round"><path d="M1.500 1l6 5.500-6 5.500"/></svg></span><span class="ty" style="letter-spacing:0.01px;transform:scaleX(1.080);transform-origin:0 50%">Textfeld</span><span class="ics"><svg class="sl" width="14" height="13" viewBox="0 0 14 13" fill="none" stroke="#666" stroke-width="1.100"><path d="M.5 2h13M.5 6.500h13M.5 11h13"/><circle cx="3.500" cy="2" r="1.200" fill="#fff"/><circle cx="8" cy="6.500" r="1.200" fill="#fff"/><circle cx="11.500" cy="11" r="1.200" fill="#fff"/></svg></span></div><div class="cb"><div class="inp"><span style="display:inline-block;letter-spacing:0.32px;transform:scaleX(1.100);transform-origin:0 50%">Mobil</span></div></div></div>
<div class="cd two" style="left:1003.9px;top:726.8px;width:197.3px"><div class="ch_"><span class="nm" style="transform:scaleX(0.991);margin-right:-0.19px">#14</span><span class="fr nl" style="transform:scaleX(0.996);margin-right:-0.07px">1/6</span><span class="cr"><svg class="ch" width="9" height="13" viewBox="0 0 9 13" fill="none" stroke="#444" stroke-width="1.500" stroke-linecap="round" stroke-linejoin="round"><path d="M1.500 1l6 5.500-6 5.500"/></svg></span><span class="ty" style="letter-spacing:0.57px">Textfeld (E-Mail)</span><span class="ics"><svg class="lk" width="12" height="13" viewBox="0 0 12 13" fill="none" stroke="#666" stroke-width="1"><path d="M3.300 5.500V3.800a2.700 2.700 0 0 1 5.400 0v1.700"/><rect x="1" y="5.500" width="10" height="6" rx=".6"/><path d="M.6 12.300h10.800" stroke-width="1.500"/><path d="M6 7.500v2" stroke-width="1.300"/></svg><svg class="sl" width="14" height="13" viewBox="0 0 14 13" fill="none" stroke="#666" stroke-width="1.100"><path d="M.5 2h13M.5 6.500h13M.5 11h13"/><circle cx="3.500" cy="2" r="1.200" fill="#fff"/><circle cx="8" cy="6.500" r="1.200" fill="#fff"/><circle cx="11.500" cy="11" r="1.200" fill="#fff"/></svg></span></div><div class="cb"><div class="inp"><span style="display:inline-block;letter-spacing:0.00px;transform:scaleX(1.072);transform-origin:0 50%">E-Mail</span></div></div></div>
<div class="cd" style="left:1207.8px;top:726.8px;width:401.2px"><div class="ch_"><span class="nm" style="transform:scaleX(0.991);margin-right:-0.19px">#15</span><span class="cl"><svg class="ch" width="9" height="13" viewBox="0 0 9 13" fill="none" stroke="#444" stroke-width="1.500" stroke-linecap="round" stroke-linejoin="round"><path d="M7.500 1L1.500 6.500l6 5.500"/></svg></span><span class="fr" style="transform:scaleX(1.168);margin-right:3.03px">2/6</span><span class="cr"><svg class="ch" width="9" height="13" viewBox="0 0 9 13" fill="none" stroke="#444" stroke-width="1.500" stroke-linecap="round" stroke-linejoin="round"><path d="M1.500 1l6 5.500-6 5.500"/></svg></span><span class="ty" style="letter-spacing:-0.00px;transform:scaleX(1.064);transform-origin:0 50%">Textfeld (URL)</span><span class="ics"><svg class="sl" width="14" height="13" viewBox="0 0 14 13" fill="none" stroke="#666" stroke-width="1.100"><path d="M.5 2h13M.5 6.500h13M.5 11h13"/><circle cx="3.500" cy="2" r="1.200" fill="#fff"/><circle cx="8" cy="6.500" r="1.200" fill="#fff"/><circle cx="11.500" cy="11" r="1.200" fill="#fff"/></svg></span></div><div class="cb"><div class="inp"><span style="display:inline-block;letter-spacing:0.14px;transform:scaleX(1.100);transform-origin:0 50%">Website</span></div></div></div>
<div class="cd" style="left:596.1px;top:832.8px;width:401.2px"><div class="ch_"><span class="nm" style="transform:scaleX(0.991);margin-right:-0.19px">#16</span><span class="cl"><svg class="ch" width="9" height="13" viewBox="0 0 9 13" fill="none" stroke="#444" stroke-width="1.500" stroke-linecap="round" stroke-linejoin="round"><path d="M7.500 1L1.500 6.500l6 5.500"/></svg></span><span class="fr" style="transform:scaleX(1.168);margin-right:3.03px">2/6</span><span class="cr"><svg class="ch" width="9" height="13" viewBox="0 0 9 13" fill="none" stroke="#444" stroke-width="1.500" stroke-linecap="round" stroke-linejoin="round"><path d="M1.500 1l6 5.500-6 5.500"/></svg></span><span class="ty" style="letter-spacing:0.00px;transform:scaleX(1.034);transform-origin:0 50%">Liste</span><span class="ics"><svg class="sl" width="14" height="13" viewBox="0 0 14 13" fill="none" stroke="#666" stroke-width="1.100"><path d="M.5 2h13M.5 6.500h13M.5 11h13"/><circle cx="3.500" cy="2" r="1.200" fill="#fff"/><circle cx="8" cy="6.500" r="1.200" fill="#fff"/><circle cx="11.500" cy="11" r="1.200" fill="#fff"/></svg></span></div><div class="cb"><div class="inp"><span style="display:inline-block;letter-spacing:0.03px;transform:scaleX(1.100);transform-origin:0 50%">Haarfarbe</span></div></div></div>

</div>
<div id="sidebar">
<div class="sbg"><i class="k7"></i><i class="k1"></i><i class="k2"></i><i class="k3"></i><i class="k4"></i><i class="k5"></i><i class="k6"></i><i class="k8"></i></div>
<div class="logo"><svg style="position:absolute;left:24.500px;top:9.500px" width="36" height="36" viewBox="-18 -18 36 36">
<g fill="#f4f4f6"><circle r="13.600"/><rect x="-2.700" y="-17.300" width="5.400" height="6" rx=".7" transform="rotate(0)"/><rect x="-2.700" y="-17.300" width="5.400" height="6" rx=".7" transform="rotate(36)"/><rect x="-2.700" y="-17.300" width="5.400" height="6" rx=".7" transform="rotate(72)"/><rect x="-2.700" y="-17.300" width="5.400" height="6" rx=".7" transform="rotate(108)"/><rect x="-2.700" y="-17.300" width="5.400" height="6" rx=".7" transform="rotate(144)"/><rect x="-2.700" y="-17.300" width="5.400" height="6" rx=".7" transform="rotate(180)"/><rect x="-2.700" y="-17.300" width="5.400" height="6" rx=".7" transform="rotate(216)"/><rect x="-2.700" y="-17.300" width="5.400" height="6" rx=".7" transform="rotate(252)"/><rect x="-2.700" y="-17.300" width="5.400" height="6" rx=".7" transform="rotate(288)"/><rect x="-2.700" y="-17.300" width="5.400" height="6" rx=".7" transform="rotate(324)"/></g>
<circle r="10" fill="#fbfbfb" stroke="#8a2a30" stroke-width="1.100"/>
<text x="0" y="5.400" text-anchor="middle" font-family="Liberation Sans, sans-serif" font-weight="700" font-size="15.500" fill="#8c1f28">S</text>
</svg>
<div class="lg">ST<b>i</b>CKY</div>
<div class="erp">ERP</div>
</div>
<div class="shr" style="top:57px;left:10px;width:220px;height:1px;opacity:.22"></div>
<div class="shr" style="top:121px"></div>
<div class="sel"><span style="display:inline-block;letter-spacing:0.20px;transform:scaleX(1.080);transform-origin:0 50%">Sticky Demo</span><i></i></div>
<div class="mi" style="top:73.5px"><span class="ic"><svg width="18" height="18" viewBox="0 0 20 20" fill="none" stroke="currentColor" stroke-width="1.2" stroke-linecap="round" stroke-linejoin="round" ><path d="M2 18V9h5v9M7 18V5h5v13M12 18V2h6v16M1 18h18"/><path d="M4 11.5h1M4 14h1M9 8h1M9 11h1M9 14h1M14.5 5h1M14.5 8h1M14.5 11h1M14.5 14h1" stroke-width="1.6"/></svg></span><span class="ml" style="letter-spacing:0.06px;transform:scaleX(1.070);transform-origin:0 50%">Mein Sticky</span></div>
<div class="mi" style="top:196.5px"><span class="ic"><svg width="18" height="18" viewBox="0 0 20 20" fill="none" stroke="currentColor" stroke-width="1.2" stroke-linecap="round" stroke-linejoin="round" ><path d="M1.5 10.5L10 2.5l8.5 8"/><path d="M4 9v9h4.5v-5h3v5H16V9"/></svg></span><span class="ml" style="letter-spacing:0.03px;transform:scaleX(1.070);transform-origin:0 50%">Dashboard</span></div>
<div class="mi" style="top:229.5px"><span class="ic"><svg width="18" height="18" viewBox="0 0 20 20" fill="none" stroke="currentColor" stroke-width="1.2" stroke-linecap="round" stroke-linejoin="round" ><path d="M4 1.5h8l4 4V18.5H4z"/><path d="M6.5 6h7v10h-7z" fill="currentColor" fill-opacity=".45"/><path d="M12 1.5v4h4"/></svg></span><span class="ml" style="letter-spacing:0.02px;transform:scaleX(1.070);transform-origin:0 50%">Belege</span><i class="car"></i></div>
<div class="mi" style="top:262.5px"><span class="ic"><svg width="18" height="18" viewBox="0 0 20 20" fill="none" stroke="currentColor" stroke-width="1.2" stroke-linecap="round" stroke-linejoin="round" ><circle cx="8" cy="6.5" r="3.8"/><path d="M1.5 17c.5-3 2.5-4.5 4.5-5M14.5 17c-.5-3-2.5-4.5-4.500-5M1.500 17h13"/><path d="M13 3.500c2.200.3 3.300 2 3.300 3.800s-1 3.200-2.300 3.700c2.500.5 4 2.500 4.500 6h-2"/></svg></span><span class="ml" style="letter-spacing:0.20px;transform:scaleX(1.070);transform-origin:0 50%">Kontakte</span></div>
<div class="mi" style="top:295.5px"><span class="ic"><svg width="18" height="18" viewBox="0 0 20 20" fill="none" stroke="currentColor" stroke-width="1.2" stroke-linecap="round" stroke-linejoin="round" ><path d="M10 1.500l8 3.500v9.500l-8 4-8-4V5z"/><path d="M2 5l8 3.500L18 5M10 8.500V18.500M6 3.200l8 3.600v4"/><path d="M2.500 6l7 3v8.500l-7-3.500z" fill="currentColor" fill-opacity=".35" stroke="none"/></svg></span><span class="ml" style="letter-spacing:0.30px;transform:scaleX(1.070);transform-origin:0 50%">Artikel</span><i class="car"></i></div>
<div class="mi" style="top:328.5px"><span class="ic"><svg width="18" height="18" viewBox="0 0 20 20" fill="none" stroke="currentColor" stroke-width="1.2" stroke-linecap="round" stroke-linejoin="round" ><circle cx="10" cy="10" r="8.200"/><path d="M10 1.800V10l6 5.500" /><path d="M10 1.800A8.200 8.200 0 0 1 16 15.500L10 10z" fill="currentColor" fill-opacity=".45" stroke="none"/></svg></span><span class="ml" style="letter-spacing:0.07px;transform:scaleX(1.070);transform-origin:0 50%">Kostenstellen</span><i class="car"></i></div>
<div class="mi" style="top:361.5px"><span class="ic"><svg width="18" height="18" viewBox="0 0 20 20" fill="none" stroke="currentColor" stroke-width="1.2" stroke-linecap="round" stroke-linejoin="round" ><rect x="1" y="3.500" width="18" height="13" rx="1.200"/><path d="M1 6h18v3H1z" fill="currentColor" fill-opacity=".8"/><path d="M3.500 12h6M3.500 14h4M13 13h3.500"/></svg></span><span class="ml" style="letter-spacing:0.00px;transform:scaleX(1.065);transform-origin:0 50%">SEPA Lastschrift</span><i class="car"></i></div>
<div class="mi" style="top:394.5px"><span class="ic"><svg width="18" height="18" viewBox="0 0 20 20" fill="none" stroke="currentColor" stroke-width="1.2" stroke-linecap="round" stroke-linejoin="round" ><rect x="1" y="3.500" width="18" height="13" rx="1.200"/><rect x="3" y="6" width="6" height="4.500" fill="currentColor" fill-opacity=".8"/><path d="M11 7h5.500M11 9.500h5.500M3 13.500h14"/></svg></span><span class="ml" style="letter-spacing:-0.00px;transform:scaleX(1.064);transform-origin:0 50%">SEPA Überweisung</span><i class="car"></i></div>
<div class="mi" style="top:427.5px"><span class="ic"><svg width="18" height="18" viewBox="0 0 20 20" fill="none" stroke="currentColor" stroke-width="1.2" stroke-linecap="round" stroke-linejoin="round" ><circle cx="10" cy="10" r="8.300"/><ellipse cx="10" cy="10" rx="4" ry="8.300"/><path d="M1.700 10h16.600M10 1.700v16.600M3 5.500h14M3 14.500h14"/></svg></span><span class="ml" style="letter-spacing:0.16px;transform:scaleX(1.070);transform-origin:0 50%">innovaphone myApps</span></div>
<div class="mi" style="top:460.5px"><span class="ic"><svg width="18" height="18" viewBox="0 0 20 20" fill="none" stroke="currentColor" stroke-width="1.2" stroke-linecap="round" stroke-linejoin="round" ><circle cx="10" cy="10" r="8.300"/><ellipse cx="10" cy="10" rx="4" ry="8.300"/><path d="M1.700 10h16.600M10 1.700v16.600M3 5.500h14M3 14.500h14"/></svg></span><span class="ml" style="letter-spacing:0.01px;transform:scaleX(1.070);transform-origin:0 50%">innovaphone MyPBX</span></div>
<div class="mi" style="top:493.5px"><span class="ic"><svg width="18" height="18" viewBox="0 0 20 20" fill="none" stroke="currentColor" stroke-width="1.2" stroke-linecap="round" stroke-linejoin="round" ><circle cx="10" cy="10" r="8.300"/><ellipse cx="10" cy="10" rx="4" ry="8.300"/><path d="M1.700 10h16.600M10 1.700v16.600M3 5.500h14M3 14.500h14"/></svg></span><span class="ml" style="letter-spacing:0.16px;transform:scaleX(1.070);transform-origin:0 50%">lexoffice Apps</span></div>
<div class="mi" style="top:526.5px"><span class="ic"><svg width="18" height="18" viewBox="0 0 20 20" fill="none" stroke="currentColor" stroke-width="1.2" stroke-linecap="round" stroke-linejoin="round" ><circle cx="10" cy="10" r="8.300"/><ellipse cx="10" cy="10" rx="4" ry="8.300"/><path d="M1.700 10h16.600M10 1.700v16.600M3 5.500h14M3 14.500h14"/></svg></span><span class="ml" style="letter-spacing:0.03px;transform:scaleX(1.070);transform-origin:0 50%">Externe Webseiten</span><i class="car"></i></div>
<div class="mi" style="top:559.5px"><span class="ic"><svg width="18" height="18" viewBox="0 0 20 20" fill="none" stroke="currentColor" stroke-width="1.2" stroke-linecap="round" stroke-linejoin="round" ><path d="M3.500 1.500h13v17h-13z"/><path d="M6 1.500v7h4v-7" /><path d="M5 3h2M5 5.500h2"/></svg></span><span class="ml" style="letter-spacing:0.09px;transform:scaleX(1.070);transform-origin:0 50%">Projekte &amp; Aufgaben</span><i class="car"></i></div>
<div class="mi" style="top:592.5px"><span class="ic"><svg width="18" height="18" viewBox="0 0 20 20" fill="none" stroke="currentColor" stroke-width="1.2" stroke-linecap="round" stroke-linejoin="round" ><circle cx="4.500" cy="10" r="2.600"/><circle cx="15" cy="4" r="2.600"/><circle cx="15" cy="16" r="2.600"/><path d="M6.800 8.700l6-3.400M6.800 11.300l6 3.400"/></svg></span><span class="ml" style="letter-spacing:0.10px;transform:scaleX(1.070);transform-origin:0 50%">Coronahilfen</span></div>
<div class="mi" style="top:625.5px"><span class="ic"><svg width="18" height="18" viewBox="0 0 20 20" fill="none" stroke="currentColor" stroke-width="1.2" stroke-linecap="round" stroke-linejoin="round" ><circle cx="4.500" cy="10" r="2.600"/><circle cx="15" cy="4" r="2.600"/><circle cx="15" cy="16" r="2.600"/><path d="M6.800 8.700l6-3.400M6.800 11.300l6 3.400"/></svg></span><span class="ml" style="letter-spacing:0.00px;transform:scaleX(0.956);transform-origin:0 50%">TEst</span></div>
<div class="mi" style="top:658.5px"><span class="ic"><svg width="18" height="18" viewBox="0 0 20 20" fill="none" stroke="currentColor" stroke-width="1.2" stroke-linecap="round" stroke-linejoin="round" ><circle cx="4.500" cy="10" r="2.600"/><circle cx="15" cy="4" r="2.600"/><circle cx="15" cy="16" r="2.600"/><path d="M6.800 8.700l6-3.400M6.800 11.300l6 3.400"/></svg></span><span class="ml" style="letter-spacing:0.00px;transform:scaleX(1.048);transform-origin:0 50%">Welsch</span></div>
<div class="mi" style="top:691.5px"><span class="ic"><svg width="18" height="18" viewBox="0 0 20 20" fill="none" stroke="currentColor" stroke-width="1.2" stroke-linecap="round" stroke-linejoin="round" ><circle cx="10" cy="9.500" r="2.800"/><path d="M8 7.500L4 3M12 7.500L16 3M8 11.500L3.500 17M12 11.500L16.500 17M10 12.300V15"/><circle cx="3.300" cy="2.300" r="1.300"/><circle cx="16.700" cy="2.300" r="1.300"/><circle cx="2.800" cy="17.700" r="1.300"/><circle cx="17.200" cy="17.700" r="1.300"/><circle cx="10" cy="16.500" r="1.300"/></svg></span><span class="ml" style="letter-spacing:0.22px;transform:scaleX(1.070);transform-origin:0 50%">IT-Abteilung</span><i class="car"></i></div>
<div class="mi" style="top:724.5px"><span class="ic"><svg width="18" height="18" viewBox="0 0 20 20" fill="none" stroke="currentColor" stroke-width="1.2" stroke-linecap="round" stroke-linejoin="round" ><path d="M10 1.500l8 3.500v9.500l-8 4-8-4V5z"/><path d="M2 5l8 3.500L18 5M10 8.500V18.500M6 3.200l8 3.600v4"/><path d="M2.500 6l7 3v8.500l-7-3.500z" fill="currentColor" fill-opacity=".35" stroke="none"/></svg></span><span class="ml" style="letter-spacing:0.00px;transform:scaleX(1.064);transform-origin:0 50%">Archive</span><i class="car"></i></div>
<div class="mi" style="top:791.5px"><span class="ic"><svg width="18" height="18" viewBox="0 0 20 20" fill="none" stroke="currentColor" stroke-width="1.2" stroke-linecap="round" stroke-linejoin="round" ><path d="M10 1v18M1 10h18"/></svg></span><span class="ml" style="letter-spacing:0.29px;transform:scaleX(1.070);transform-origin:0 50%">Module hinzufügen</span></div>
<div class="mi act" style="top:824.5px"><span class="ic"><svg width="18" height="18" viewBox="0 0 20 20" fill="none" stroke="currentColor" stroke-width="1.2" stroke-linecap="round" stroke-linejoin="round" ><ellipse cx="10" cy="4.500" rx="7.500" ry="3"/><path d="M2.500 4.500v11c0 1.700 3.400 3 7.500 3s7.500-1.300 7.500-3v-11"/><path d="M2.500 8.200c0 1.700 3.400 3 7.500 3s7.500-1.300 7.500-3M2.500 11.900c0 1.700 3.400 3 7.500 3s7.500-1.300 7.500-3"/></svg></span><span class="ml" style="letter-spacing:0.46px;transform:scaleX(1.070);transform-origin:0 50%">Datenstrukturen</span></div>
<div class="mi" style="top:857.5px"><span class="ic"><svg width="18" height="18" viewBox="0 0 20 20" fill="none" stroke="currentColor" stroke-width="1.2" stroke-linecap="round" stroke-linejoin="round" ><circle cx="10" cy="10" r="2.600"/><circle cx="10" cy="10" r="5.200"/><path d="M10 1.200l1.600 2.300 2.700-.9.600 2.800 2.800.6-.9 2.700L19 10l-2.200 1.600.9 2.700-2.800.6-.6 2.800-2.700-.9L10 19l-1.600-2.200-2.700.9-.6-2.800-2.800-.6.900-2.700L1 10l2.200-1.600-.9-2.700 2.800-.6.600-2.800 2.700.9z"/></svg></span><span class="ml" style="letter-spacing:0.32px;transform:scaleX(1.070);transform-origin:0 50%">Firmeneinstellungen</span></div>

<div class="shr" style="top:772px"></div>
</div>
<div id="topbar">
<div class="hb"><i></i><i></i><i></i></div>
<div class="srch"><span style="display:inline-block;letter-spacing:0.04px;transform:scaleX(1.060);transform-origin:0 50%">Suche</span></div>
<div class="plus"></div>
<div class="av"><svg width="37" height="37" viewBox="0 0 37 37"><rect width="37" height="37" rx="5.500" fill="#2196f6"/><path d="M9.300 42" fill="none"/><ellipse cx="18.300" cy="33.300" rx="7" ry="1.200" fill="#1a7fd6"/><path d="M10.800 23.500l2.200-1.300h10.500l2.200 1.300 1 7.500-2.200.4-.4-2v3h-11.800v-3l-.4 2-2.200-.4z" fill="#a35f3f"/><path d="M12.500 22.500h3.300v9.600h-3.300zM20.700 22.500h3.300v9.600h-3.300z" fill="#c9744e"/><path d="M15.800 22.200h4.900v10h-4.900z" fill="#23232b"/><path d="M9.700 30.300l2 .4-.3 1.600-2-.4zM26.900 30.300l-2 .4.300 1.600 2-.4z" fill="#f3dcc0"/><path d="M13 32h4.800v1.500H13zM19 32h4.800v1.500H19z" fill="#2b2b33"/><ellipse cx="18.300" cy="16" rx="8.400" ry="7.600" fill="#f3dcc0"/><path d="M8.700 15.500c-.6-6.500 3.200-10.800 9.600-10.800s10.400 4.300 9.600 10.800c-.8-2.600-2.500-4-4-4.600-1.200 1-3.300 1.500-5.600 1.500-2.300 0-4.400-.5-5.600-1.500-1.500.6-3.200 2-4 4.600z" fill="#f5c63f"/><circle cx="15.700" cy="17" r="2.100" fill="#fff"/><circle cx="20.900" cy="17" r="2.100" fill="#fff"/><circle cx="16.100" cy="17" r=".6" fill="#222"/><circle cx="20.500" cy="17" r=".6" fill="#222"/><path d="M16.500 21c1.200.5 2.400.5 3.600 0" stroke="#8a5a40" stroke-width=".6" fill="none"/></svg></div>
<div class="ti" style="left:1358px;top:15.500px"><svg width="24" height="26" viewBox="0 0 24 26" fill="none" stroke="currentColor" stroke-width="1.900" stroke-linecap="round" stroke-linejoin="round"><path d="M12 2.700c-3.600 0-5.400 2.800-5.500 6.300-.1 3.800-1.400 7-4 10l4 .3 2.800 0h5.400l2.800 0 4-.3c-2.600-3-3.900-6.200-4-10-.100-3.500-1.900-6.300-5.500-6.300z"/><path d="M8.500 19.800c.6 2.200 1.800 3.400 3.500 3.400s2.900-1.200 3.500-3.400"/></svg></div>
<div class="bdg">9+</div>
<div class="ti" style="left:1406px;top:17px"><svg width="24" height="23" viewBox="0 0 24 23" fill="none" stroke="currentColor" stroke-width="1.800" stroke-linecap="round" stroke-linejoin="round"><path d="M7 5V3a2 2 0 0 1 2-2h12a2 2 0 0 1 2 2v8a2 2 0 0 1-2 2h-2"/><path d="M3 5h13a2 2 0 0 1 2 2v8a2 2 0 0 1-2 2H9.500l-4.500 4v-4H3a2 2 0 0 1-2-2V7a2 2 0 0 1 2-2z"/><path d="M4.500 11.300h2.700M8.200 11.300h2.700M11.900 11.300h2.700" stroke-width="2.600" stroke-linecap="butt"/></svg></div>
<div class="ti" style="left:1454px;top:17px"><svg width="25" height="23" viewBox="0 0 25 23" fill="none" stroke="currentColor" stroke-width="2" stroke-linecap="round" stroke-linejoin="round"><path d="M20.300 10.500v9.500a1.500 1.500 0 0 1-1.500 1.500H3.500A1.500 1.500 0 0 1 2 20V3.300a1.500 1.500 0 0 1 1.500-1.500h15.300"/><path d="M6 10.300l5.300 4.800L23.500 3.200"/></svg></div>
<div class="ti" style="left:1503px;top:16px"><svg width="24" height="24" viewBox="0 0 24 24" fill="#b9b9c2" stroke="#dcdce2" stroke-width="1" stroke-linejoin="round"><path d="M19.700 1.700l2.600 2.600c.5.500.5 1.100 0 1.600L7.600 20.600 3.400 16.400 18.100 1.700c.5-.5 1.100-.5 1.600 0z"/><path d="M3.400 16.400l4.200 4.200-6 1.800z" fill="#e8e8ee"/></svg></div>
<div class="ti" style="left:1554px;top:15.500px"><svg width="18" height="24" viewBox="0 0 18 24" fill="none" stroke="currentColor" stroke-width="1.800" stroke-linecap="round" stroke-linejoin="round"><path d="M9 1.500c-2.400 0-3.700 1.900-3.700 4.300 0 2.100 1.200 3.100 1.500 5 .3 1.800-.8 3.200-2.600 3.900-1.500.5-2.400 1-2.400 2.400v1h14.400v-1c0-1.400-.9-1.900-2.400-2.400-1.800-.7-2.900-2.100-2.600-3.900.3-1.900 1.500-2.900 1.500-5 0-2.400-1.300-4.300-3.700-4.300z"/><path d="M2 21.800h3.200M7.400 21.800h3.200M12.800 21.800H16" stroke-width="2.400" stroke-linecap="butt"/></svg></div>
<div class="ti" style="left:1599.500px;top:16px"><svg width="24" height="24" viewBox="0 0 24 24" fill="none" stroke="currentColor" stroke-width="1.800" stroke-linecap="round" stroke-linejoin="round"><circle cx="12" cy="12" r="10.800"/><path d="M8.800 9.200c0-1.900 1.300-3.200 3.300-3.200 1.900 0 3.200 1.200 3.200 2.900 0 2.600-3.300 2.500-3.300 5.300"/><path d="M12 17.300v.7" stroke-width="2.100"/></svg></div>

</div>
<div id="sb"><i class="up"></i><i class="th"></i><i class="dn"></i></div>
</body></html>
